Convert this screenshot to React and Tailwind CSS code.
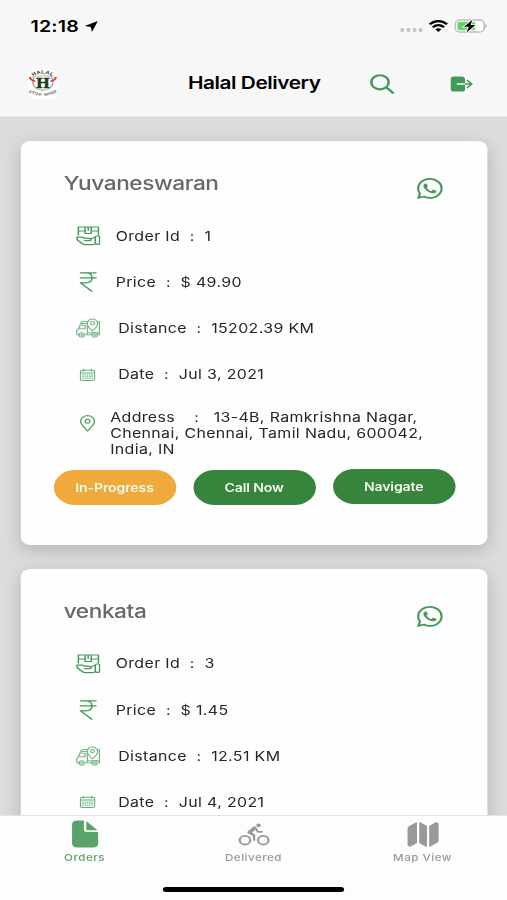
import React from "react";
import {
  IoLogOut,
  IoLogoWhatsapp,
  IoDocument,
  IoBicycle,
  IoMap,
} from "react-icons/io5";

const orders = [
  {
    name: "Yuvaneswaran",
    id: "1",
    price: "$ 49.90",
    distance: "15202.39 KM",
    date: "Jul 3, 2021",
    address: ["13-4B, Ramkrishna Nagar,", "Chennai, Chennai, Tamil Nadu, 600042,", "India, IN"],
  },
  {
    name: "venkata",
    id: "3",
    price: "$ 1.45",
    distance: "12.51 KM",
    date: "Jul 4, 2021",
  },
];

function PackageIcon() {
  return (
    <svg viewBox="0 0 20 20" className="h-5 w-5" fill="none" stroke="#43985a" strokeWidth="1.2" strokeLinejoin="round" strokeLinecap="round">
      <path d="M2 9V1h16.400v8M2 5h5.500M12.500 5h5.900M7.500 1v6.500h5V1M10 1v3.500" />
      <path d="M11.300 14.600H7.200M11.300 14.600c1.500-.2 1.400-2-.1-2.200l-4-.2c-1-.7-1.700-1-3-1H.8c-.2 1.700.3 2.800 1.500 3.800l3 2.700c.7.700 1.500 1 2.500 1h5c1.300 0 2-.3 3-1" />
      <path d="M11.800 12.800l4-1.500" />
      <rect x="15.800" y="10" width="3.600" height="8.300" rx="1.300" />
    </svg>
  );
}

function RupeeIcon() {
  return (
    <svg viewBox="0 0 14 20" className="h-5 w-3.5" fill="none" stroke="#43985a" strokeWidth="1.25">
      <path d="M0 .8h14M0 5.800h14M.2.8h4.700c3.400 0 5.200 2 5.200 5s-1.800 5.100-5.200 5.100H.9l9.300 8.600" />
    </svg>
  );
}

function TruckIcon() {
  return (
    <svg viewBox="0 0 20 20" className="h-5 w-5" fill="none" stroke="#74b888" strokeWidth="1" strokeLinejoin="round">
      <path d="M2.500 16.800H.7v-4.500l1.300-1.500 1.500-4c.4-1 1-1.400 2-1.400h3.800v11.400H6.800M2 10.800h5.500V7.300H4.500M9.300 14.800h10v2h-1.800M9.300 16.800h3.900M9.300 3.500h1M17.300 3.500h1.900v11.300M3.500 5.400c.6-1 1.500-1.900 2.800-1.900h3" />
      <path d="M13.500 13c-2.500-3-4.300-5-4.300-7.600a4.300 4.300 0 0 1 8.600 0c0 2.600-1.800 4.600-4.300 7.600z" />
      <circle cx="13.500" cy="5.200" r="1.600" />
      <circle cx="4.700" cy="16.900" r="2.100" />
      <circle cx="15.300" cy="16.900" r="2.100" />
      <circle cx="4.700" cy="16.900" r=".5" />
      <circle cx="15.300" cy="16.900" r=".5" />
    </svg>
  );
}

function CalendarIcon() {
  return (
    <svg viewBox="0 0 13 12" className="h-3 w-[13px]" fill="none" stroke="#67af7d" strokeWidth="1">
      <rect x=".6" y="1.300" width="11.800" height="10.100" rx="1.500" />
      <path d="M.6 3.900h11.800M3.200 0v2.500M9.800 0v2.500" />
      <path d="M2.300 6h8.600M2.300 7.800h8.600M2.300 9.600h8.600" strokeWidth=".9" strokeDasharray="1.300 .5" />
    </svg>
  );
}

function PinIcon() {
  return (
    <svg viewBox="0 0 13 17" className="h-[17px] w-[13px]" fill="none" stroke="#55a56d" strokeWidth="1.200">
      <path d="M6.500 16C3.500 12 .8 9.200.8 6.400a5.700 5.700 0 0 1 11.400 0c0 2.800-2.700 5.600-5.700 9.600z" />
      <circle cx="6.500" cy="6.300" r="1.900" />
    </svg>
  );
}

function SearchIcon() {
  return (
    <svg viewBox="0 0 20 20" className="h-5 w-5" fill="none" stroke="#43985a" strokeWidth="2.100" strokeLinecap="round">
      <circle cx="8.300" cy="8.300" r="7.100" />
      <path d="M13.600 13.600l5.200 5.200" />
    </svg>
  );
}

function Logo() {
  return (
    <svg viewBox="0 0 24 30" className="h-[30px] w-6">
      <defs>
        <path id="arcTop" d="M4 7.500Q12 1.500 20 7.500" />
      </defs>
      <rect width="24" height="30" rx="6" fill="#fff" />
      <path d="M5 8.500a8.300 8.300 0 1 0 14 0" fill="none" stroke="#8f9284" strokeWidth=".9" />
      <path d="M2.500 8.500q10-3.500 19 0" fill="none" stroke="#8f9284" strokeWidth=".6" />
      <path d="M1.300 8c.3 2.500 2 3.800 4.500 4.300M22.700 8c-.3 2.500-2 3.800-4.500 4.300" stroke="#df3b2c" strokeWidth="1.700" fill="none" />
      <text fontSize="4.800" fontWeight="700" fill="#27362e" fontFamily="Liberation Sans, sans-serif">
        <textPath href="#arcTop" textLength="17">HALAL</textPath>
      </text>
      <text x="12" y="18.800" textAnchor="middle" fontSize="14" fontWeight="700" fill="#173d25" stroke="#173d25" strokeWidth=".5" fontFamily="Liberation Serif, serif">H</text>
      <g fontSize="3.800" fontWeight="700" fill="#59635d" fontFamily="Liberation Sans, sans-serif">
        <text x="0" y="23.500" transform="rotate(20 0 23.500)" textLength="11">STOP</text>
        <text x="13.400" y="27.300" transform="rotate(-20 13.400 27.300)" textLength="11">SHOP</text>
      </g>
    </svg>
  );
}

function StatusBar() {
  return (
    <div className="flex h-[52px] items-center justify-between pr-[16px] pl-[25px]">
      <div className="flex items-center gap-[5px]">
        <span className="text-[16px] font-semibold tracking-[0.100px]">12:18</span>
        <svg viewBox="0 0 11 11" className="h-[11px] w-[11px]">
          <path d="M10.900.1L6.100 11 5.200 5.900.1 5z" fill="#000" />
        </svg>
      </div>
      <div className="flex items-center">
        <div className="mt-2 flex gap-[2px] pr-[5px]">
          {[0, 1, 2, 3].map((i) => (
            <i key={i} className="h-[3.500px] w-[3px] rounded-[1px] bg-[#c6c6c6]" />
          ))}
        </div>
        <svg viewBox="0 0 16 12" className="mr-[5px] h-3 w-4" fill="none" stroke="#000" strokeWidth="2.200">
          <path d="M.9 4.300Q8-2.200 15.100 4.300M3.400 7.200Q8 3 12.600 7.200" />
          <path d="M5.500 9.300Q8 7.200 10.500 9.300L8 12z" fill="#000" stroke="none" />
        </svg>
        <svg viewBox="0 0 27 14" className="h-[14px] w-[27px]">
          <rect x=".8" y="1" width="23.600" height="12" rx="3.800" fill="#fff" stroke="#bdbdbd" strokeWidth="1.300" />
          <rect x="2.500" y="2.700" width="14.500" height="8.600" rx="1.800" fill="#65d36e" />
          <path d="M25.500 5v4c1.200-.5 1.200-3.500 0-4z" fill="#9d9d9d" />
          <path d="M14.800.7L8 7.800h3.800L10 13.600l7.200-7.500h-4z" fill="#000" stroke="#f6f7f6" strokeWidth="1.600" paintOrder="stroke" />
        </svg>
      </div>
    </div>
  );
}

function Row({ icon, label, value, wide }) {
  return (
    <div className="flex h-[46.200px] items-center">
      <div className="flex w-[65px] shrink-0 justify-end">
        <div className="flex w-5 shrink-0 justify-center">{icon}</div>
      </div>
      <span className={wide ? "pt-px pl-[15px] whitespace-pre" : "pt-px pl-[13px] whitespace-pre"}>
        {`${label}  :  ${value}`}
      </span>
    </div>
  );
}

function Button({ children, className }) {
  return (
    <button className={`h-[35px] w-[100px] rounded-[17.500px] pt-[2px] text-[11.500px] font-semibold tracking-[-0.100px] text-[#f4f9ee] ${className}`}>
      {children}
    </button>
  );
}

function OrderCard({ order }) {
  return (
    <section className="h-[404px] shrink-0 rounded-[8px] bg-[#fefefe] text-[13px] tracking-[0.300px] text-[#252525] shadow-[0_5px_15px_rgba(0,0,0,0.180)]">
      <div className="flex h-[72px] items-start justify-between pr-[35px] pl-[35.500px]">
        <h2 className="pt-[28px] text-[18.500px] leading-[28px] font-medium tracking-[-0.360px] text-[#686868]">{order.name}</h2>
        <IoLogoWhatsapp className="mt-[35px] h-[25px] w-[24px] text-[#43985a]" />
      </div>
      <Row icon={<PackageIcon />} label="Order Id" value={order.id} />
      <Row icon={<RupeeIcon />} label="Price" value={order.price} />
      <Row icon={<TruckIcon />} label="Distance" value={order.distance} wide />
      <Row icon={<CalendarIcon />} label="Date" value={order.date} wide />
      {order.address && (
        <>
          <div className="flex pt-[11px]">
            <div className="mt-1.5 mr-[12.500px] ml-[48px]">
              <PinIcon />
            </div>
            <p className="leading-[16px] tracking-[0.290px] whitespace-pre">
              {`Address    :   ${order.address[0]}`}
              <br />
              {order.address[1]}
              <br />
              {order.address[2]}
            </p>
          </div>
          <div className="mt-[13.500px] flex gap-[14px] pl-[27px]">
            <Button className="bg-[#f0a93b]">In-Progress</Button>
            <Button className="bg-[#37853c]">Call Now</Button>
            <Button className="-mt-px bg-[#37853c]">Navigate</Button>
          </div>
        </>
      )}
    </section>
  );
}

function Tab({ icon, label, className }) {
  return (
    <div className={`flex flex-1 flex-col items-center ${className}`}>
      <div className="flex h-9 items-center">{icon}</div>
      <span className="text-[9.500px] leading-[12px] font-medium tracking-[0.400px]">{label}</span>
    </div>
  );
}

export default function App() {
  return (
    <div className="h-[900px] w-[507px] overflow-hidden bg-[#dcdcdc]">
      <div className="flex h-[900px] w-[414px] origin-top-left scale-x-[1.2246] flex-col font-['Inter','Liberation_Sans',sans-serif] text-black">
        <header className="h-[117px] shrink-0 border-b border-[#e8e8e8] bg-[#f7f7f7]">
          <StatusBar />
          <div className="flex h-[63px] items-center">
            <div className="ml-[23px] w-[130.500px]">
              <Logo />
            </div>
            <h1 className="w-[148.500px] pt-px text-[17px] font-semibold tracking-[-0.370px] whitespace-nowrap">Halal Delivery</h1>
            <SearchIcon />
            <IoLogOut className="ml-[44px] h-[22px] w-[22px] text-[#43985a]" />
          </div>
        </header>
        <main className="flex min-h-0 flex-1 flex-col gap-[23.500px] overflow-hidden px-[16.500px] pt-[24px]">
          {orders.map((order) => (
            <OrderCard key={order.name} order={order} />
          ))}
        </main>
        <footer className="flex h-[85px] shrink-0 flex-col border-t border-[#e4e4e4] bg-[#fdfdfd]">
          <nav className="flex">
            <Tab className="text-[#5aa369]" label="Orders" icon={<IoDocument className="h-8 w-[31px]" />} />
            <Tab className="text-[#999999]" label="Delivered" icon={<IoBicycle className="h-[29px] w-[29px]" />} />
            <Tab className="text-[#999999]" label="Map View" icon={<IoMap className="h-[29px] w-[29px]" />} />
          </nav>
          <div className="mx-auto mt-[23px] h-[5px] w-[148px] rounded-full bg-black" />
        </footer>
      </div>
    </div>
  );
}
